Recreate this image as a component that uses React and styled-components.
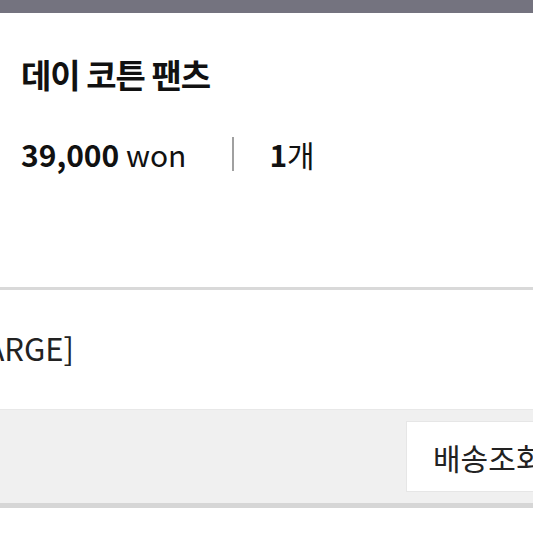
import styled, { createGlobalStyle } from "styled-components";

const GlobalStyle = createGlobalStyle`
    body {
        margin: 0;
        background: #ffffff;
        font-family: "Noto Sans CJK KR", "Noto Sans", sans-serif;
        overflow: hidden;
    }
`;

export default function App() {
    return (
        <Page>
            <GlobalStyle />
            <TopBar />
            <Product>
                <Title>데이 코튼 팬츠</Title>
                <PriceRow>
                    <Price><b>39,000</b> won</Price>
                    <Divider />
                    <Count><b>1</b>개</Count>
                </PriceRow>
            </Product>
            <Separator />
            <Option>[LARGE]</Option>
            <ActionBar>
                <ActionButton>배송조회</ActionButton>
            </ActionBar>
        </Page>
    );
}

const Page = styled.div`
    width: 533px;
    height: 533px;
    overflow: hidden;
    display: flex;
    flex-direction: column;
`;

const TopBar = styled.div`
    height: 13px;
    background: #74737f;
`;

const Product = styled.div`
    padding: 41px 0 0 21px;
    height: 234px;
    box-sizing: border-box;
    color: #111111;
`;

const Title = styled.div`
    font-size: 33px;
    font-weight: 700;
    line-height: 40px;
    letter-spacing: -1px;
`;

const PriceRow = styled.div`
    margin-top: 40px;
    display: flex;
    align-items: center;
    font-size: 30px;
    line-height: 40px;

    b {
        font-weight: 700;
    }
`;

const Price = styled.span`
    font-weight: 400;
`;

const Divider = styled.div`
    width: 2px;
    height: 34px;
    background: #a0a0a0;
    margin: 0 35px 0 46px;
`;

const Count = styled.span`
    font-weight: 400;
`;

const Separator = styled.div`
    height: 3px;
    background: #d9d9d9;
    margin-top: 40px;
`;

const Option = styled.div`
    margin: 38px 0 0 -42px;
    font-size: 31px;
    line-height: 40px;
    color: #222222;
`;

const ActionBar = styled.div`
    margin-top: 41px;
    height: 93px;
    background: #f0f0f0;
    border-top: 1px solid #e8e8e8;
    border-bottom: 5px solid #d6d6d6;
    display: flex;
    align-items: center;
    justify-content: flex-end;
`;

const ActionButton = styled.div`
    flex-shrink: 0;
    margin-right: -30px;
    width: 157px;
    height: 71px;
    box-sizing: border-box;
    background: #ffffff;
    border: 1px solid #e6e6e6;
    padding-left: 26px;
    display: flex;
    align-items: center;
    font-size: 30px;
    color: #222222;
    white-space: nowrap;
`;
